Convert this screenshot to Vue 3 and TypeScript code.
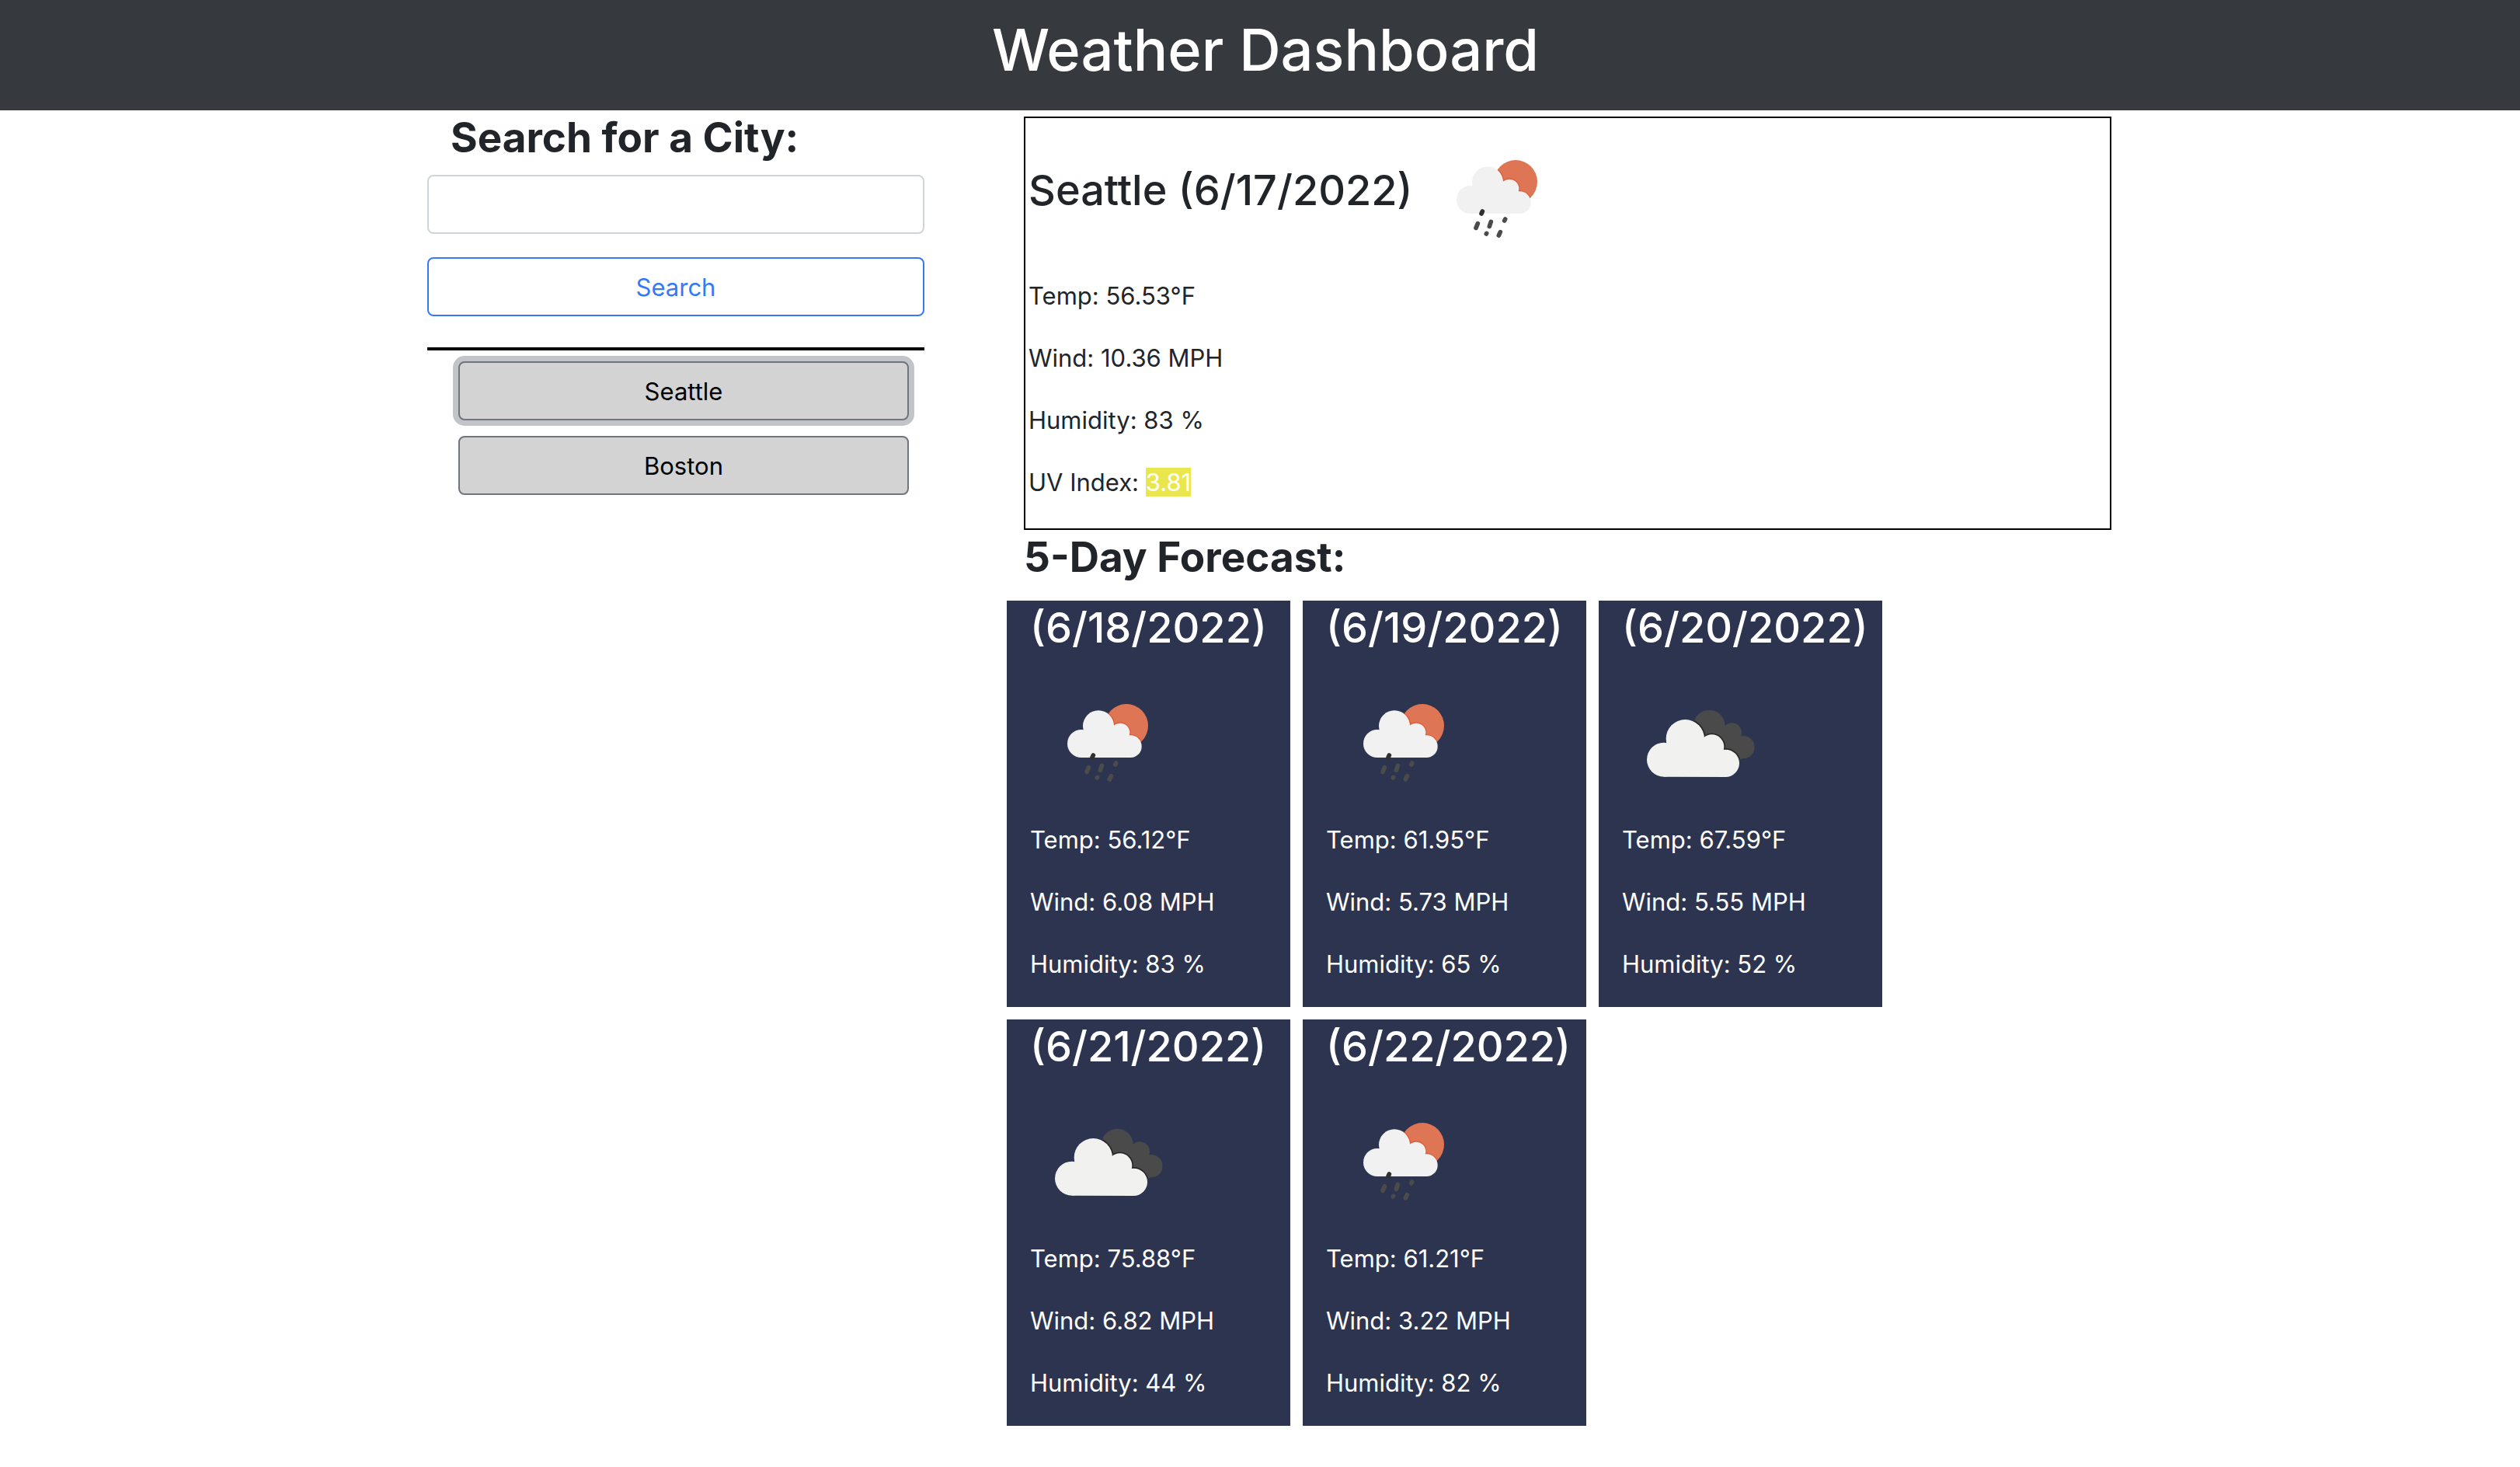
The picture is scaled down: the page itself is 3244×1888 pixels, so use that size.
<script setup lang="ts">
import { ref } from 'vue'

type Sky = 'rain' | 'clouds'

interface Day {
  date: string
  sky: Sky
  temp: string
  wind: string
  humidity: number
}

const query = ref('')
const selected = ref('Seattle')
const history = ref<string[]>(['Seattle', 'Boston'])

const today: Day = { date: '6/17/2022', sky: 'rain', temp: '56.53', wind: '10.36', humidity: 83 }
const uvIndex = '3.81'

const forecast: Day[] = [
  { date: '6/18/2022', sky: 'rain', temp: '56.12', wind: '6.08', humidity: 83 },
  { date: '6/19/2022', sky: 'rain', temp: '61.95', wind: '5.73', humidity: 65 },
  { date: '6/20/2022', sky: 'clouds', temp: '67.59', wind: '5.55', humidity: 52 },
  { date: '6/21/2022', sky: 'clouds', temp: '75.88', wind: '6.82', humidity: 44 },
  { date: '6/22/2022', sky: 'rain', temp: '61.21', wind: '3.22', humidity: 82 },
]

function search() {
  const name = query.value.trim()
  if (!name) return
  if (!history.value.includes(name)) history.value.push(name)
  selected.value = name
  query.value = ''
}
</script>

<template>
  <!-- Shared icon shapes -->
  <svg class="defs" width="0" height="0" aria-hidden="true">
    <defs>
      <clipPath id="sun-clip"><circle cx="330" cy="162" r="84" /></clipPath>
      <g id="rain-cloud">
        <circle cx="156" cy="231" r="54" />
        <circle cx="222" cy="163" r="60" />
        <circle cx="306" cy="189" r="37" />
        <circle cx="346" cy="242" r="43" />
        <path d="M156 285V200L222 150L310 185L346 215V285Z" />
      </g>
      <clipPath id="back-clip">
        <circle cx="331" cy="132" r="61" />
        <circle cx="418" cy="159" r="38" />
        <circle cx="462" cy="215" r="44" />
        <path d="M331 120L418 150L470 215L462 259L394 277L280 180Z" />
      </clipPath>
      <g id="front-cloud">
        <circle cx="156" cy="263" r="66" />
        <circle cx="238" cy="182" r="74" />
        <circle cx="341" cy="213" r="47" />
        <circle cx="394" cy="277" r="53" />
        <path d="M156 329V220L238 160L345 210L394 240V330Z" />
      </g>
      <symbol id="icon-rain" viewBox="-42 -72 600 600">
        <circle cx="330" cy="162" r="84" fill="#de7656" />
        <g clip-path="url(#sun-clip)">
          <use href="#rain-cloud" fill="#e25c38" stroke="#e25c38" stroke-width="8" />
        </g>
        <use href="#rain-cloud" fill="#f1f1f1" />
        <g stroke="#4b4b4c" stroke-width="17" stroke-linecap="round">
          <path d="M202 276L198 285" stroke="#303032" />
          <path d="M184 323L177 340" />
          <path d="M235 316L229 334" />
          <path d="M290 306L287 312" />
          <path d="M218 361L217 363" />
          <path d="M271 356L265 369" />
        </g>
      </symbol>
      <symbol id="icon-clouds" viewBox="-6 -102 600 600">
        <g clip-path="url(#back-clip)">
          <rect x="250" y="60" width="270" height="230" fill="#4a4a4a" />
          <use href="#front-cloud" fill="#262626" stroke="#262626" stroke-width="10" />
        </g>
        <use href="#front-cloud" fill="#f1f1f0" />
      </symbol>
    </defs>
  </svg>

  <header class="banner">
    <h1>Weather Dashboard</h1>
  </header>

  <main class="layout">
    <aside class="sidebar">
      <form class="search" @submit.prevent="search">
        <h2 class="search-title"><label for="city">Search for a City:</label></h2>
        <input id="city" v-model="query" class="field" type="text" autocomplete="off" />
        <button class="btn btn-search" type="submit">Search</button>
      </form>
      <hr class="rule" />
      <div class="history">
        <button
          v-for="city in history"
          :key="city"
          type="button"
          class="btn btn-city"
          :class="{ active: city === selected }"
          @click="selected = city"
        >
          {{ city }}
        </button>
      </div>
    </aside>

    <section class="results">
      <article class="today">
        <div class="today-head">
          <h3>{{ selected }} ({{ today.date }})</h3>
          <svg class="icon" aria-hidden="true"><use :href="`#icon-${today.sky}`" /></svg>
        </div>
        <p>Temp: {{ today.temp }}°F</p>
        <p>Wind: {{ today.wind }} MPH</p>
        <p>Humidity: {{ today.humidity }} %</p>
        <p>UV Index: <span class="uv">{{ uvIndex }}</span></p>
      </article>

      <h2 class="forecast-title">5-Day Forecast:</h2>
      <div class="forecast">
        <article v-for="day in forecast" :key="day.date" class="day">
          <h3>({{ day.date }})</h3>
          <svg class="icon" aria-hidden="true"><use :href="`#icon-${day.sky}`" /></svg>
          <p>Temp: {{ day.temp }}°F</p>
          <p>Wind: {{ day.wind }} MPH</p>
          <p>Humidity: {{ day.humidity }} %</p>
        </article>
      </div>
    </section>
  </main>
</template>

<style>
body {
  margin: 0;
  background: #fff;
  color: #212529;
  font: 400 31px/50px Inter, 'Liberation Sans', sans-serif;
}
</style>

<style scoped>
* {
  box-sizing: border-box;
}
h1,
h2,
h3,
p {
  margin: 0;
}
h2,
h3 {
  line-height: 70px;
}
h2 {
  font-size: 53px;
  font-weight: 700;
}
h3 {
  font-size: 54px;
  font-weight: 500;
  white-space: nowrap;
}
p {
  margin-bottom: 30px;
}
.defs {
  position: absolute;
}
.icon {
  display: block;
  flex: none;
  width: 200px;
  height: 200px;
}
.banner {
  padding: 16px 0 30px 14px;
  background: #363a3f;
  color: #fff;
  text-align: center;
}
h1 {
  font-size: 74px;
  line-height: 96px;
  font-weight: 500;
}
.layout {
  display: grid;
  grid-template-columns: 700fr 1460fr;
  gap: 68px;
  max-width: 2280px;
  margin: 0 auto;
  padding: 0 14px 0 38px;
}
.sidebar {
  padding: 0 30px;
}
.search {
  display: flex;
  flex-direction: column;
}
.search-title {
  margin-bottom: 13px;
  padding-left: 30px;
}
.field,
.btn {
  display: block;
  width: 100%;
  height: 76px;
  padding: 12px 24px;
  border: 2px solid #ced4da;
  border-radius: 8px;
  background: #fff;
  color: inherit;
  font: inherit;
}
.field {
  margin-bottom: 30px;
}
.btn {
  cursor: pointer;
}
.btn-search {
  border-color: #3579f7;
  color: #3579f7;
}
.rule {
  height: 4px;
  margin: 40px 0 14px;
  border: 0;
  background: #000;
}
.history {
  display: flex;
  flex-direction: column;
  gap: 20px;
  padding: 0 20px 0 40px;
}
.btn-city {
  border-color: #6e757c;
  background: #d3d3d3;
  color: #000;
}
.btn-city.active {
  box-shadow: 0 0 0 7px #c1c5c9;
}
.today {
  margin: 8px 30px 0;
  padding: 4px;
  border: 2px solid #000;
}
.today-head {
  display: flex;
  align-items: flex-start;
  gap: 8px;
}
.today-head h3 {
  padding-top: 54px;
}
.uv {
  background: #eae74e;
  color: #fff;
}
.forecast-title {
  margin: 0 30px 21px;
}
.forecast {
  display: flex;
  flex-wrap: wrap;
  gap: 16px;
  padding-left: 8px;
}
.day {
  width: 365px;
  padding: 0 30px;
  background: #2c3450;
  color: #fff;
}
.day h3 {
  margin-bottom: 13px;
}
</style>
